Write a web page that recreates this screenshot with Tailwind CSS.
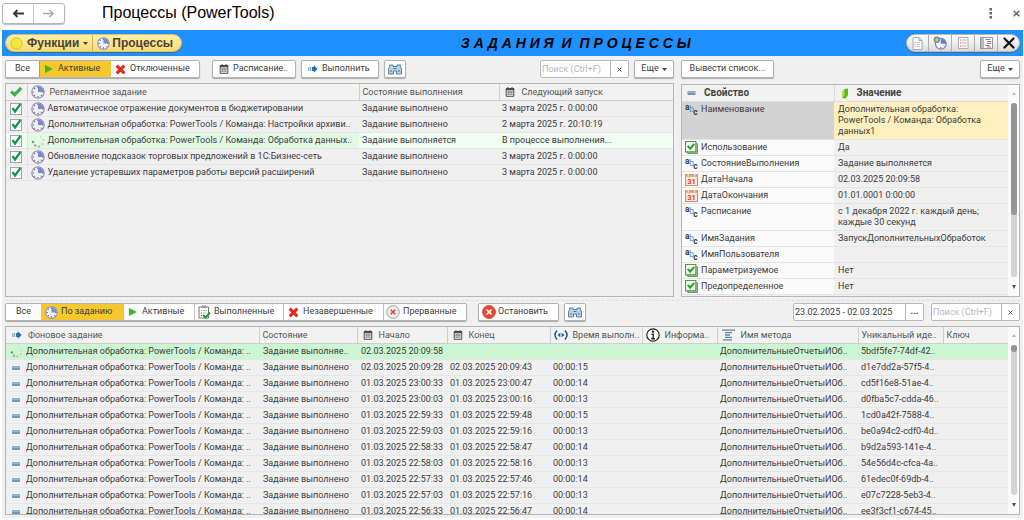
<!DOCTYPE html>
<html lang="ru">
<head>
    <meta charset="UTF-8">
    <meta name="viewport" content="width=device-width, initial-scale=1.0">
    <title>Процессы (PowerTools)</title>
    <script src="https://cdn.jsdelivr.net/npm/@tailwindcss/browser@4"></script>
</head>
<body class="h-screen overflow-hidden bg-white flex flex-col font-[Roboto,Arial,sans-serif] text-[9px] text-[#3c3c3c]">

    <!-- Иконки -->
    <svg class="hidden" aria-hidden="true">
        <symbol id="clock" viewBox="0 0 14 14">
            <circle cx="7" cy="7" r="6.2" fill="#eef2fb" stroke="#7c93c4" stroke-width="1.1"/>
            <path d="M7 7V1.300A5.700 5.700 0 0 1 12.700 7z" fill="#6d8fd0"/>
            <path d="M7 1.500v1.600M7 11v1.600M1.500 7h1.600M11 7h1.600M3.200 3.200l.8.8M3.200 10.800l.8-.8M10.800 10.800l-.8-.8" stroke="#e0443c" stroke-width="1.200"/>
        </symbol>
        <symbol id="check" viewBox="0 0 14 12">
            <path d="M1.500 6.500L3.500 4.700 5.500 7 11 1.200 13 3 5.700 10.600z" fill="#3cb344" stroke="#2f9c3a" stroke-width=".6"/>
        </symbol>
        <symbol id="tick" viewBox="0 0 14 14">
            <path d="M3.500 6L6 9.500 11.500 2" fill="none" stroke="#12944a" stroke-width="2.200"/>
        </symbol>
        <symbol id="play" viewBox="0 0 10 10">
            <path d="M1 1l8 4-8 4z" fill="#3cb81c"/>
        </symbol>
        <symbol id="cross" viewBox="0 0 10 10">
            <path d="M1.500 1.500l7 7M8.500 1.500l-7 7" stroke="#e02a1e" stroke-width="2.800"/>
        </symbol>
        <symbol id="calendar" viewBox="0 0 10 10">
            <path d="M1.200 1.500h7.600v7.800H1.200z" fill="#f5f5f5" stroke="#4a4a4a"/>
            <path d="M1 1.300h8v2H1z" fill="#4a4a4a"/>
            <path d="M3 0v2M7 0v2" stroke="#4a4a4a"/>
            <path d="M2.500 5h5M2.500 7.200h5" stroke="#4a4a4a" stroke-width="1.300" stroke-dasharray="1.300 .6"/>
        </symbol>
        <symbol id="run" viewBox="0 0 10 8">
            <path d="M.8 2v4M2.600 2v4" stroke="#6b9cc4" stroke-width="1"/>
            <path d="M4 2h1.800V.3L9.700 4 5.800 7.700V6H4z" fill="#2f6fa8"/>
        </symbol>
        <symbol id="binoculars" viewBox="0 0 14 11">
            <path d="M1.500 2.500V1h3.500v1.500h4V1h3.500v1.500L13.500 5v5H8.500V7h-3v3H.5V5z" fill="#b5d3ea" stroke="#51708c" stroke-width=".9"/>
            <path d="M2 7h2M10 7h2M5.500 4.500h3" stroke="#51708c"/>
        </symbol>
        <symbol id="spinner" viewBox="0 0 14 14">
            <circle cx="2" cy="8" r="1.300" fill="#8a8a8a"/><circle cx="4.200" cy="11.500" r="1.300" fill="#a3a3a3"/>
            <circle cx="8" cy="12.500" r="1.200" fill="#b5b5b5"/><circle cx="11.500" cy="10" r="1.100" fill="#c4c4c4"/>
            <circle cx="12.400" cy="6" r="1" fill="#d0d0d0"/><circle cx="10" cy="3" r=".9" fill="#d8d8d8"/>
            <circle cx="3.500" cy="4" r=".8" fill="#e0e0e0"/>
        </symbol>
        <symbol id="minus" viewBox="0 0 8 4">
            <rect width="8" height="4" rx=".6" fill="#6f96b8"/><rect x=".5" y=".5" width="7" height="1.300" fill="#a4c0d8"/>
        </symbol>
        <symbol id="abc" viewBox="0 0 14 14">
            <text x="0" y="7" font-size="9" font-weight="bold" fill="#3c3c3c">a</text>
            <text x="4.500" y="10" font-size="9" fill="#3c8fd0">b</text>
            <text x="9" y="12.500" font-size="9" font-weight="bold" fill="#3c3c3c">c</text>
        </symbol>
        <symbol id="flag" viewBox="0 0 12 12">
            <path d="M2.500 2.500h9v9h-9z" fill="#a9cfa0" stroke="#5e8f55" stroke-width=".8"/>
            <path d="M.5.5h9.500v9.500H.5z" fill="#f4faf2" stroke="#4f9a45" stroke-width="1"/>
            <path d="M2.500 4.500L4.800 7 8.500 2.700" fill="none" stroke="#2c9c2c" stroke-width="1.900"/>
        </symbol>
        <symbol id="day" viewBox="0 0 12 12">
            <path d="M.5 1.500h11v10H.5z" fill="#fbeadb" stroke="#c99468"/>
            <path d="M.5 1h11v2.500H.5z" fill="#d9a578"/>
            <path d="M3 0v2.500M9 0v2.500" stroke="#f7efe6"/>
            <text x="2" y="10.300" font-size="7" font-weight="bold" fill="#e0452c">31</text>
        </symbol>
        <symbol id="clipboard" viewBox="0 0 13 14">
            <path d="M1 2h9.500v11H1z" fill="#fff" stroke="#777"/>
            <path d="M3.500.5H8V3H3.500z" fill="#999"/>
            <path d="M3 5.500h1M3 8h1M3 10.500h1" stroke="#e0443c" stroke-width="1.200"/>
            <path d="M5 5.500h4M5 8h4" stroke="#bbb"/>
            <path d="M5 10l2.500 2.500 4.500-5" fill="none" stroke="#1f9a32" stroke-width="2"/>
        </symbol>
        <symbol id="aborted" viewBox="0 0 14 14">
            <circle cx="7" cy="7" r="6.300" fill="#ececec" stroke="#999" stroke-width=".9"/>
            <path d="M4.700 4.700l4.600 4.600M9.300 4.700L4.700 9.300" stroke="#d8313a" stroke-width="1.300"/>
        </symbol>
        <symbol id="stop" viewBox="0 0 14 14">
            <circle cx="7" cy="7" r="6.400" fill="#ea4433" stroke="#c0352a" stroke-width=".8"/>
            <path d="M4.500 4.500l5 5M9.500 4.500l-5 5" stroke="#fff" stroke-width="1.700"/>
        </symbol>
        <symbol id="duration" viewBox="0 0 14 10">
            <path d="M3 .5Q-1 5 3 9.500M11 .5Q15 5 11 9.500" fill="none" stroke="#1f5a8a" stroke-width="1.500"/>
            <path d="M6.300 2.700v4.600L3.600 5zM7.700 2.700v4.600L10.400 5z" fill="#1f5a8a"/>
        </symbol>
        <symbol id="info" viewBox="0 0 14 14">
            <circle cx="7" cy="7" r="6.200" fill="#fff" stroke="#222" stroke-width="1.200"/>
            <circle cx="7" cy="3.600" r="1.200" fill="#222"/>
            <path d="M5.500 6.200H7.200V10.500M5.200 10.700h3.800" fill="none" stroke="#222" stroke-width="1.400"/>
        </symbol>
        <symbol id="method" viewBox="0 0 13 12">
            <path d="M0 1.200h13M3 3.700h7M3 6h5M3 8.400h7M1 10.900h9" stroke="#5f86a8" stroke-width="1.300"/>
        </symbol>
        <symbol id="value" viewBox="0 0 8 11">
            <path d="M1 4L3.500 1 7 .5 7 7 4.500 10.500 1 10z" fill="#58b81c"/><path d="M1 4L3.500 1v6.500L1 10z" fill="#a3e24c"/>
        </symbol>
    </svg>

    <header class="h-[30px] shrink-0 flex items-center pl-0.5 pr-1">
        <div class="flex h-[21px] -mt-1 rounded-[3px] border border-[#b5b5b5] shadow-[0_1px_1px_#bbb]">
            <button class="w-[31px] flex items-center justify-center border-r border-[#c8c8c8]" aria-label="Назад">
                <svg width="12" height="9" viewBox="0 0 12 9"><path d="M12 4.500H2M5.500 1L2 4.500 5.500 8" fill="none" stroke="#3a3a3a" stroke-width="2"/></svg>
            </button>
            <button class="w-[30px] flex items-center justify-center" aria-label="Вперед">
                <svg width="12" height="9" viewBox="0 0 12 9"><path d="M0 4.500h10M6.500 1L10 4.500 6.500 8" fill="none" stroke="#a8a8a8" stroke-width="1.500"/></svg>
            </button>
        </div>
        <h1 class="ml-[37px] -mt-1 font-['Liberation_Sans',Arial,sans-serif] text-[16px] leading-5 text-black">Процессы (PowerTools)</h1>
        <button class="ml-auto -mt-1" aria-label="Меню">
            <svg width="4" height="11" viewBox="0 0 4 11" fill="#666"><path d="M.5 0h2.500v2.500H.5zM.5 4h2.500v2.500H.5zM.5 8h2.500v2.500H.5z"/></svg>
        </button>
        <button class="ml-5 -mt-1" aria-label="Закрыть">
            <svg width="7" height="7" viewBox="0 0 7 7"><path d="M.7.7l5.600 5.600M6.300.7L.7 6.300" stroke="#666" stroke-width="1.500"/></svg>
        </button>
    </header>

    <div class="flex-1 min-h-0 flex flex-col ml-0.5 mr-px mb-0.5 bg-[#f0f0f0]">
        <!-- Синяя шапка -->
        <div class="h-[26px] shrink-0 bg-[#1e90ff] flex items-center pl-[3px] pr-[3px] font-['Liberation_Sans',Arial,sans-serif] font-bold">
            <nav class="flex-[454] flex">
                <div class="flex h-[18px] rounded-full border border-[#d8c36a] bg-linear-to-b from-[#fff0a8] to-[#f6dc72] text-[12px] text-[#4a4435] shadow-[0_1px_1px_#4a6a90]">
                    <button class="flex items-center pl-1 pr-1 border-r border-[#c9b566]">
                        <svg class="mr-1" width="13" height="13" viewBox="0 0 13 13"><circle cx="6.500" cy="6.500" r="5.500" fill="#f7e73a" stroke="#cdbb3a"/></svg>
                        Функции
                        <svg class="ml-1" width="5" height="3"><path d="M0 0h5L2.500 3z" fill="#4a4435"/></svg>
                    </button>
                    <button class="flex items-center pl-1 pr-2">
                        <svg class="mr-0.5" width="13" height="13"><use href="#clock"/></svg>Процессы
                    </button>
                </div>
            </nav>
            <h2 class="whitespace-pre text-[14px] italic text-black">З А Д А Н И Я  И  П Р О Ц Е С С Ы</h2>
            <div class="flex-[328] flex justify-end">
                <div class="flex h-[18px] rounded-full border border-[#b9b9b9] bg-linear-to-b from-white to-[#dcdcdc] divide-x divide-[#b0b0b0] shadow-[0_1px_1px_#4a6a90]">
                    <button class="w-[22px] flex items-center justify-center" aria-label="Журнал">
                        <svg width="11" height="13" viewBox="0 0 11 13"><path d="M1 .5h6l3 3v9H1z" fill="#fafcff" stroke="#8b9aaa" stroke-width=".8"/><path d="M7 .5v3h3" fill="none" stroke="#8b9aaa" stroke-width=".8"/><path d="M3 5v6" stroke="#e07a70" stroke-dasharray="1 1"/><path d="M5 5.500h3M5 7.500h3M5 9.500h3" stroke="#aab" stroke-width=".7"/></svg>
                    </button>
                    <button class="w-[23px] flex items-center justify-center" aria-label="Настройка процессов">
                        <svg width="14" height="14" viewBox="0 0 14 14"><circle cx="7.800" cy="7.800" r="5.400" fill="#eef2fb" stroke="#6f88bd" stroke-width="1.200"/><path d="M7.800 7.800V2.500a5.300 5.300 0 0 1 5.300 5.300z" fill="#5f82c8"/><path d="M7.800 11v1.500M11 9.500l1 1" stroke="#e0443c"/><circle cx="3.800" cy="3.800" r="2.400" fill="#c5c5c5" stroke="#8a8a8a" stroke-width="1.600"/></svg>
                    </button>
                    <button class="w-[23px] flex items-center justify-center" aria-label="Список">
                        <svg width="11" height="12" viewBox="0 0 11 12"><path d="M.5.5h9.500v11H.5z" fill="#fdfdfd" stroke="#999" stroke-width=".8"/><path d="M2 3h1M2 6h1M2 9h1" stroke="#e0443c" stroke-width="1.200"/><path d="M4 3h4.500M4 6h4.500M4 9h4.500" stroke="#aaa"/></svg>
                    </button>
                    <button class="w-[23px] flex items-center justify-center" aria-label="Дерево">
                        <svg width="13" height="12" viewBox="0 0 13 12"><path d="M.5.500h12v11H.5z" fill="#fdfdfd" stroke="#8a8a8a" stroke-width=".9"/><path d="M1 1h3v10H1z" fill="#a9bccd"/><path d="M5.500 2.500h5M7 4.500h4M7 6.500h4M5.500 8.500h4M7 10h4" stroke="#8a5a45" stroke-width=".8"/></svg>
                    </button>
                    <button class="w-[21px] flex items-center justify-center" aria-label="Закрыть форму">
                        <svg width="12" height="12" viewBox="0 0 12 12"><path d="M1.500 1.500l9 9M10.500 1.500l-9 9" stroke="#111" stroke-width="2.200" stroke-linecap="round"/></svg>
                    </button>
                </div>
            </div>
        </div>

        <!-- Верхняя часть: задания и свойства -->
        <div class="flex shrink-0 gap-[7px] pl-[3px] pr-[3px] pt-1 pb-[3px]">
            <section class="flex-[669] min-w-0">
                <div class="h-[18px] mb-[5px] flex items-center">
                    <div class="flex h-[18px] bg-white rounded-[2px] border border-[#b3b3b3] shadow-[0_1px_1px_#aaa]">
                        <button class="w-[33px]">Все</button>
                        <button class="w-[72px] flex items-center pl-1 bg-[#f5c92e] border-l border-[#c9a21c]"><svg class="mr-1" width="10" height="10"><use href="#play"/></svg>Активные</button>
                        <button class="w-[88px] flex items-center pl-1"><svg class="mr-1" width="11" height="11"><use href="#cross"/></svg>Отключенные</button>
                    </div>
                    <button class="ml-3 w-[84px] flex items-center h-[18px] pl-1.5 bg-white rounded-[2px] border border-[#b3b3b3] shadow-[0_1px_1px_#aaa]"><svg class="mr-1" width="10" height="10"><use href="#calendar"/></svg>Расписание..</button>
                    <button class="ml-[5px] w-[78px] flex items-center h-[18px] pl-1.5 bg-white rounded-[2px] border border-[#b3b3b3] shadow-[0_1px_1px_#aaa]"><svg class="mr-1" width="10" height="8"><use href="#run"/></svg>Выполнить</button>
                    <button class="ml-[5px] flex items-center justify-center h-[18px] w-[22px] bg-white rounded-[2px] border border-[#b3b3b3] shadow-[0_1px_1px_#aaa]" aria-label="Найти"><svg width="14" height="11"><use href="#binoculars"/></svg></button>
                    <div class="ml-auto flex h-[18px] w-[89px] bg-white rounded-[2px] border border-[#b8b8b8]">
                        <input type="text" aria-label="Поиск заданий" placeholder="Поиск (Ctrl+F)" class="min-w-0 flex-1 pl-px leading-4 placeholder:text-[#b8b8b8] outline-none">
                        <button class="w-[18px] border-l border-[#b8b8b8] flex items-center justify-center" aria-label="Очистить"><svg width="5" height="5"><path d="M.5.5l4 4M4.500.5l-4 4" stroke="#555"/></svg></button>
                    </div>
                    <button class="ml-[5px] w-10 flex items-center justify-center gap-[3px] h-[18px] bg-white rounded-[2px] border border-[#b3b3b3] shadow-[0_1px_1px_#aaa]">Еще<svg width="5" height="3"><path d="M0 0h5L2.500 3z" fill="#444"/></svg></button>
                </div>
                <div class="h-[214px] border border-[#b5b5b5] overflow-hidden">
                    <table class="w-full table-fixed border-collapse text-left">
                        <thead>
                            <tr class="h-4 text-[#555] border-b border-[#cfcfcf] bg-[#f2f2f2]">
                                <th class="w-[21px] p-0 border-r border-[#cfcfcf]"><svg class="mx-auto" width="14" height="12" role="img" aria-label="Использование"><use href="#check"/></svg></th>
                                <th class="p-0 font-normal border-r border-[#cfcfcf]"><div class="flex items-center pl-[3px] leading-4"><svg class="mr-[5px]" width="14" height="14"><use href="#clock"/></svg>Регламентное задание</div></th>
                                <th class="w-[140px] p-0 pl-[3px] font-normal leading-4 border-r border-[#cfcfcf]">Состояние выполнения</th>
                                <th class="w-[174px] p-0 font-normal"><div class="flex items-center pl-[5px] leading-4"><svg class="mr-[7px]" width="10" height="10"><use href="#calendar"/></svg>Следующий запуск</div></th>
                            </tr>
                        </thead>
                        <tbody id="jobs"></tbody>
                    </table>
                </div>
            </section>

            <section class="flex-[339] min-w-0">
                <div class="h-[18px] mb-1.5 flex items-center justify-between">
                    <button class="h-[18px] w-[93px] bg-white rounded-[2px] border border-[#b3b3b3] shadow-[0_1px_1px_#aaa]">Вывести список...</button>
                    <button class="w-10 flex items-center justify-center gap-[3px] h-[18px] bg-white rounded-[2px] border border-[#b3b3b3] shadow-[0_1px_1px_#aaa]">Еще<svg width="5" height="3"><path d="M0 0h5L2.500 3z" fill="#444"/></svg></button>
                </div>
                <div class="h-[213px] flex border border-[#b5b5b5] overflow-hidden">
                    <div class="flex-1 min-w-0 overflow-hidden">
                        <table class="w-full table-fixed border-collapse text-left">
                            <thead>
                                <tr class="h-4 text-[10px] text-[#444] border-b border-[#dcdcdc] bg-[#f2f2f2]">
                                    <th class="w-[152px] p-0"><div class="flex items-center pl-[5px] leading-4"><svg class="mr-2" width="9" height="4"><use href="#minus"/></svg>Свойство</div></th>
                                    <th class="p-0 border-l border-[#dcdcdc]"><div class="flex items-center pl-1.5 leading-4"><svg class="mr-2" width="8" height="11"><use href="#value"/></svg>Значение</div></th>
                                </tr>
                            </thead>
                            <tbody id="props"></tbody>
                        </table>
                    </div>
                    <div class="w-[11px] bg-[#fafafa] flex flex-col items-center py-[7px]">
                        <svg width="4" height="3"><path d="M2 0l2 3H0z" fill="#bbb"/></svg>
                        <div class="flex-1 w-[6px] mt-2 mb-2 rounded-full bg-[#d4d4d4]"><div class="h-[112px] rounded-full bg-[#959595]"></div></div>
                        <svg width="4" height="4"><path d="M0 0h4L2 4z" fill="#555"/></svg>
                    </div>
                </div>
            </section>
        </div>

        <!-- Нижняя часть: фоновые задания -->
        <section class="flex-1 min-h-0 flex flex-col mx-[3px] mb-[3px] pt-0.5 border-t border-dashed border-[#dedede]">
            <div class="h-[18px] shrink-0 mb-[5px] flex items-center">
                <div class="flex h-[18px] bg-white rounded-[2px] border border-[#b3b3b3] divide-x divide-[#c0c0c0] shadow-[0_1px_1px_#aaa]">
                    <button class="w-[36px]">Все</button>
                    <button class="w-[82px] flex items-center pl-[3px] bg-[#f5c92e]"><svg class="mr-[3px]" width="13" height="13"><use href="#clock"/></svg>По заданию</button>
                    <button class="w-[71px] flex items-center pl-1"><svg class="mr-1" width="10" height="10"><use href="#play"/></svg>Активные</button>
                    <button class="w-[89px] flex items-center pl-[3px]"><svg class="mr-[3px]" width="13" height="14"><use href="#clipboard"/></svg>Выполненные</button>
                    <button class="w-[100px] flex items-center pl-1"><svg class="mr-1" width="11" height="11"><use href="#cross"/></svg>Незавершенные</button>
                    <button class="w-[82px] flex items-center pl-0.5"><svg class="mr-[3px]" width="14" height="14"><use href="#aborted"/></svg>Прерванные</button>
                </div>
                <button class="ml-[11px] w-[81px] flex items-center h-[18px] pl-[3px] bg-white rounded-[2px] border border-[#b3b3b3] shadow-[0_1px_1px_#aaa]"><svg class="mr-0.5" width="14" height="14"><use href="#stop"/></svg>Остановить</button>
                <button class="ml-[5px] flex items-center justify-center h-[18px] w-[22px] bg-white rounded-[2px] border border-[#b3b3b3] shadow-[0_1px_1px_#aaa]" aria-label="Найти"><svg width="14" height="11"><use href="#binoculars"/></svg></button>
                <div class="ml-auto flex h-[18px] w-[131px] bg-white rounded-[2px] border border-[#b8b8b8]">
                    <input type="text" aria-label="Период" value="23.02.2025 - 02.03.2025" class="min-w-0 flex-1 pl-px leading-4 outline-none">
                    <button class="w-[18px] border-l border-[#b8b8b8] font-bold">...</button>
                </div>
                <div class="ml-[7px] flex h-[18px] w-[89px] bg-white rounded-[2px] border border-[#b8b8b8]">
                    <input type="text" aria-label="Поиск фоновых заданий" placeholder="Поиск (Ctrl+F)" class="min-w-0 flex-1 pl-px leading-4 placeholder:text-[#b8b8b8] outline-none">
                    <button class="w-[18px] border-l border-[#b8b8b8] flex items-center justify-center" aria-label="Очистить"><svg width="5" height="5"><path d="M.5.5l4 4M4.500.5l-4 4" stroke="#555"/></svg></button>
                </div>
            </div>
            <div class="flex-1 min-h-0 flex border border-[#b5b5b5] overflow-hidden">
                <div class="flex-1 min-w-0 overflow-hidden">
                    <table class="w-full table-fixed border-collapse text-left">
                        <thead>
                            <tr class="h-4 text-[#555] border-b border-[#cfcfcf] bg-[#f2f2f2] [&>th]:p-0 [&>th]:font-normal [&>th]:whitespace-nowrap [&>th]:overflow-hidden [&>th]:leading-4 [&>th+th]:border-l [&>th+th]:border-[#cfcfcf]">
                                <th><div class="flex items-center pl-1.5"><svg class="mr-1.5" width="10" height="8"><use href="#run"/></svg>Фоновое задание</div></th>
                                <th class="w-[98px]"><div class="pl-[3px]">Состояние</div></th>
                                <th class="w-[90px]"><div class="flex items-center pl-[5px]"><svg class="mr-1.5" width="10" height="10"><use href="#calendar"/></svg>Начало</div></th>
                                <th class="w-[103px]"><div class="flex items-center pl-[5px]"><svg class="mr-1.5" width="10" height="10"><use href="#calendar"/></svg>Конец</div></th>
                                <th class="w-[92px]"><div class="flex items-center pl-[3px]"><svg class="mr-[5px] shrink-0" width="14" height="10"><use href="#duration"/></svg>Время выполн..</div></th>
                                <th class="w-[75px]"><div class="flex items-center pl-[3px]"><svg class="mr-[5px] shrink-0" width="14" height="14"><use href="#info"/></svg>Информа..</div></th>
                                <th class="w-[141px]"><div class="flex items-center pl-1"><svg class="mr-1.5" width="13" height="12"><use href="#method"/></svg>Имя метода</div></th>
                                <th class="w-[85px]"><div class="pl-[3px]">Уникальный иде..</div></th>
                                <th class="w-[65px]"><div class="pl-[3px]">Ключ</div></th>
                            </tr>
                        </thead>
                        <tbody id="tasks"></tbody>
                    </table>
                </div>
                <div class="w-[11px] bg-[#fafafa] flex flex-col items-center py-[7px]">
                    <svg width="4" height="3"><path d="M2 0l2 3H0z" fill="#bbb"/></svg>
                    <div class="flex-1 w-[6px] mt-2 mb-2 rounded-full bg-[#d4d4d4]"><div class="h-[7px] rounded-full bg-[#959595]"></div></div>
                    <svg width="4" height="4"><path d="M0 0h4L2 4z" fill="#555"/></svg>
                </div>
            </div>
        </section>
    </div>

    <script>
    const jobs = [
        ['Автоматическое отражение документов в бюджетировании', 'Задание выполнено', '3 марта 2025 г. 0:00:00'],
        ['Дополнительная обработка: PowerTools / Команда: Настройки архиви..', 'Задание выполнено', '2 марта 2025 г. 20:10:19'],
        ['Дополнительная обработка: PowerTools / Команда: Обработка данных..', 'Задание выполняется', 'В процессе выполнения...'],
        ['Обновление подсказок торговых предложений в 1С:Бизнес-сеть', 'Задание выполнено', '3 марта 2025 г. 0:00:00'],
        ['Удаление устаревших параметров работы версий расширений', 'Задание выполнено', '3 марта 2025 г. 0:00:00']
    ];
    document.getElementById('jobs').innerHTML = jobs.map((j, i) => `
        <tr class="h-4 border-b border-[#e6e6e6] whitespace-nowrap ${i === 2 ? 'bg-[#f0fdf3]' : ''}">
            <td class="p-0 border-r border-[#e2e2e2]">
                <label class="grid w-[14px] h-[14px] mx-auto place-items-center">
                    <input type="checkbox" checked aria-label="${j[0]}" class="[grid-area:1/1] appearance-none w-3 h-3 bg-white border border-[#a5a5a5]">
                    <svg class="[grid-area:1/1] pointer-events-none" width="14" height="14"><use href="#tick"/></svg>
                </label>
            </td>
            <td class="p-0 overflow-hidden ${i === 2 ? 'bg-[#e2f9e4]' : ''}"><div class="flex items-center pl-[3px] leading-[15px]"><svg class="mr-[3px] shrink-0" width="14" height="14"><use href="${i === 2 ? '#spinner' : '#clock'}"/></svg>${j[0]}</div></td>
            <td class="p-0 pl-[3px] leading-[15px]">${j[1]}</td>
            <td class="p-0 pl-[3px] leading-[15px]">${j[2]}</td>
        </tr>`).join('');

    const props = [
        ['abc', 'Наименование', 'Дополнительная обработка:<br>PowerTools / Команда: Обработка<br>данных1'],
        ['flag', 'Использование', 'Да'],
        ['abc', 'СостояниеВыполнения', 'Задание выполняется'],
        ['day', 'ДатаНачала', '02.03.2025 20:09:58'],
        ['day', 'ДатаОкончания', '01.01.0001 0:00:00'],
        ['abc', 'Расписание', 'с 1 декабря 2022 г. каждый день;<br>каждые 30 секунд'],
        ['abc', 'ИмяЗадания', 'ЗапускДополнительныхОбработок'],
        ['abc', 'ИмяПользователя', ''],
        ['flag', 'Параметризуемое', 'Нет'],
        ['flag', 'Предопределенное', 'Нет']
    ];
    document.getElementById('props').innerHTML = props.map((p, i) => `
        <tr class="border-b border-[#e4e4e4] leading-[11px] align-top">
            <td class="p-0 ${i === 0 ? 'bg-[#d3d3d3]' : 'bg-[#fafafa]'}"><div class="flex h-[15px] items-center pl-[3px]"><svg class="mr-[3px]" width="13" height="13"><use href="#${p[0]}"/></svg>${p[1]}</div></td>
            <td class="p-0 pl-1 pt-0.5 pb-0.5 whitespace-nowrap ${i === 0 ? 'bg-[#fff0c0]' : ''}">${p[2]}</td>
        </tr>`).join('');

    const tasks = [
        ['Задание выполняе..', '02.03.2025 20:09:58', '', '', '5bdf5fe7-74df-42..'],
        ['Задание выполнено', '02.03.2025 20:09:28', '02.03.2025 20:09:43', '00:00:15', 'd1e7dd2a-57f5-4..'],
        ['Задание выполнено', '01.03.2025 23:00:33', '01.03.2025 23:00:47', '00:00:14', 'cd5f16e8-51ae-4..'],
        ['Задание выполнено', '01.03.2025 23:00:03', '01.03.2025 23:00:16', '00:00:13', 'd0fba5c7-cdda-46..'],
        ['Задание выполнено', '01.03.2025 22:59:33', '01.03.2025 22:59:48', '00:00:15', '1cd0a42f-7588-4..'],
        ['Задание выполнено', '01.03.2025 22:59:03', '01.03.2025 22:59:16', '00:00:13', 'be0a94c2-cdf0-4d..'],
        ['Задание выполнено', '01.03.2025 22:58:33', '01.03.2025 22:58:47', '00:00:14', 'b9d2a593-141e-4..'],
        ['Задание выполнено', '01.03.2025 22:58:03', '01.03.2025 22:58:16', '00:00:13', '54e56d4c-cfca-4a..'],
        ['Задание выполнено', '01.03.2025 22:57:33', '01.03.2025 22:57:46', '00:00:14', '61edec0f-69db-4..'],
        ['Задание выполнено', '01.03.2025 22:57:03', '01.03.2025 22:57:16', '00:00:13', 'e07c7228-5eb3-4..'],
        ['Задание выполнено', '01.03.2025 22:56:33', '01.03.2025 22:56:47', '00:00:14', 'ee3f3cf1-c674-45..']
    ];
    document.getElementById('tasks').innerHTML = tasks.map((t, i) => `
        <tr class="h-4 border-b border-[#e6e6e6] whitespace-nowrap leading-[15px] [&>td]:p-0 [&>td]:overflow-hidden ${i === 0 ? 'bg-[#ccf5d2]' : ''}">
            <td><div class="flex items-center"><span class="w-5 shrink-0 flex justify-center"><svg width="${i === 0 ? 13 : 8}" height="${i === 0 ? 13 : 4}"><use href="${i === 0 ? '#spinner' : '#minus'}"/></svg></span>Дополнительная обработка: PowerTools / Команда: ..</div></td>
            <td><div class="pl-1">${t[0]}</div></td>
            <td><div class="pl-1">${t[1]}</div></td>
            <td><div class="pl-[3px]">${t[2]}</div></td>
            <td><div class="pl-[3px]">${t[3]}</div></td>
            <td></td>
            <td><div class="pl-[3px]">ДополнительныеОтчетыИОб..</div></td>
            <td><div class="pl-[3px]">${t[4]}</div></td>
            <td></td>
        </tr>`).join('');
    </script>
</body>
</html>
